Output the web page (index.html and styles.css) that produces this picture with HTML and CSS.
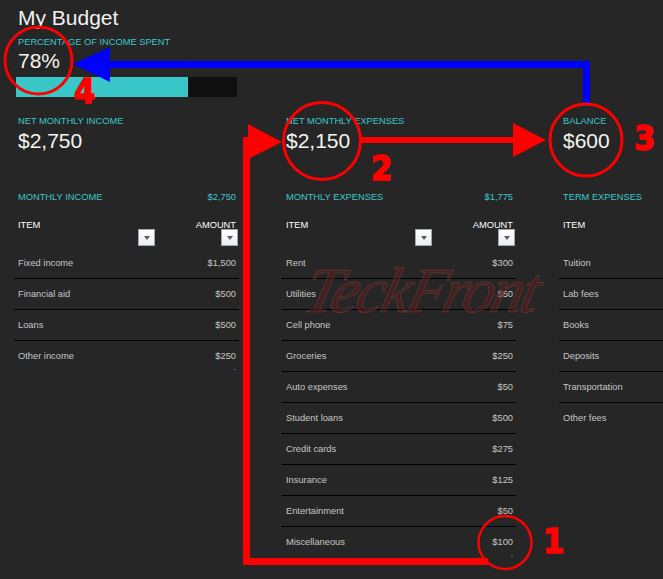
FILE: index.html
```html
<!DOCTYPE html>
<html lang="en">
<head>
<meta charset="utf-8">
<title>My Budget</title>
<link rel="stylesheet" href="styles.css">
</head>
<body>
<div class="page">
  <h1 class="title">My Budget</h1>
  <div class="grid">
    <div class="kpi spent">
      <div class="label">PERCENTAGE OF INCOME SPENT</div>
      <div class="value value-tight">78%</div>
      <div class="bar"><div class="bar-fill" style="width:78%"></div></div>
    </div>
    <div class="kpi kpi-row">
      <div class="label">NET MONTHLY INCOME</div>
      <div class="value">$2,750</div>
    </div>
    <div class="kpi kpi-row">
      <div class="label">NET MONTHLY EXPENSES</div>
      <div class="value">$2,150</div>
    </div>
    <div class="kpi kpi-row">
      <div class="label">BALANCE</div>
      <div class="value">$600</div>
    </div>

    <section class="block">
      <div class="block-head"><span>MONTHLY INCOME</span><span>$2,750</span></div>
      <div class="table t-income">
        <div class="thead">
          <div class="th th-item"><span class="th-text">ITEM</span><span class="dd"></span></div>
          <div class="th th-amt"><span class="th-text">AMOUNT</span><span class="dd"></span></div>
        </div>
        <div class="rows">
          <div class="row"><span>Fixed income</span><span>$1,500</span></div>
          <div class="row"><span>Financial aid</span><span>$500</span></div>
          <div class="row"><span>Loans</span><span>$500</span></div>
          <div class="row"><span>Other income</span><span>$250</span></div>
        </div>
      </div>
    </section>

    <section class="block">
      <div class="block-head"><span>MONTHLY EXPENSES</span><span>$1,775</span></div>
      <div class="table t-expenses">
        <div class="thead">
          <div class="th th-item"><span class="th-text">ITEM</span><span class="dd"></span></div>
          <div class="th th-amt"><span class="th-text">AMOUNT</span><span class="dd"></span></div>
        </div>
        <div class="rows">
          <div class="row"><span>Rent</span><span>$300</span></div>
          <div class="row"><span>Utilities</span><span>$50</span></div>
          <div class="row"><span>Cell phone</span><span>$75</span></div>
          <div class="row"><span>Groceries</span><span>$250</span></div>
          <div class="row"><span>Auto expenses</span><span>$50</span></div>
          <div class="row"><span>Student loans</span><span>$500</span></div>
          <div class="row"><span>Credit cards</span><span>$275</span></div>
          <div class="row"><span>Insurance</span><span>$125</span></div>
          <div class="row"><span>Entertainment</span><span>$50</span></div>
          <div class="row"><span>Miscellaneous</span><span>$100</span></div>
        </div>
      </div>
    </section>

    <section class="block">
      <div class="block-head"><span>TERM EXPENSES</span></div>
      <div class="table t-term">
        <div class="thead">
          <div class="th th-item"><span class="th-text">ITEM</span></div>
        </div>
        <div class="rows">
          <div class="row"><span>Tuition</span></div>
          <div class="row"><span>Lab fees</span></div>
          <div class="row"><span>Books</span></div>
          <div class="row"><span>Deposits</span></div>
          <div class="row"><span>Transportation</span></div>
          <div class="row"><span>Other fees</span></div>
        </div>
      </div>
    </section>
  </div>
</div>

<div class="watermark">TeckFront</div>

<svg class="annot" width="663" height="579" viewBox="0 0 663 579" xmlns="http://www.w3.org/2000/svg">
  <path d="M106 64.5 H586.5 V104" fill="none" stroke="#0000ff" stroke-width="7" stroke-linejoin="miter"/>
  <polygon points="73,64 110,47 110,82" fill="#0000ff"/>
  <path d="M360 140 H516" fill="none" stroke="#ff0000" stroke-width="6"/>
  <polygon points="546,140 513,123 513,157" fill="#ff0000"/>
  <path d="M246.5 137 V561.5 H488" fill="none" stroke="#ff0000" stroke-width="7" stroke-linejoin="miter"/>
  <polygon points="282,142 248,124 248,159" fill="#ff0000"/>
  <circle cx="38.5" cy="60.5" r="33.5" fill="none" stroke="#ff0000" stroke-width="3"/>
  <circle cx="322" cy="141" r="38.5" fill="none" stroke="#ff0000" stroke-width="3"/>
  <circle cx="586" cy="140" r="36" fill="none" stroke="#ff0000" stroke-width="3"/>
  <circle cx="505" cy="542.5" r="26.5" fill="none" stroke="#ff0000" stroke-width="2.5"/>
  <text class="num" x="74" y="103">4</text>
  <text class="num" x="371" y="180">2</text>
  <text class="num" x="634" y="150">3</text>
  <text class="num" x="543" y="553">1</text>
</svg>
</body>
</html>
```

FILE: styles.css
```css
html, body {
  margin: 0;
  padding: 0;
}

body {
  width: 663px;
  height: 579px;
  overflow: hidden;
  background: #262626;
  font-family: "Liberation Sans", Arial, sans-serif;
  position: relative;
}

.page {
  padding-left: 14px;
}

.title {
  margin: 6px 0 0 4px;
  font-size: 21px;
  line-height: 24px;
  font-weight: normal;
  color: #f2f2f2;
}

.grid {
  display: grid;
  grid-template-columns: 225px 234px 104px;
  column-gap: 43px;
  align-items: start;
}

.kpi {
  padding-left: 4px;
}

.spent {
  grid-column: 1 / -1;
  margin-top: 6px;
}

.kpi-row {
  margin-top: 18px;
}

.label {
  font-size: 9.3px;
  line-height: 12px;
  color: #3cc8cc;
  white-space: nowrap;
}

.value {
  margin-top: 2px;
  font-size: 21px;
  line-height: 24px;
  color: #f4f4f0;
}

.value-tight {
  margin-top: 1px;
}

.bar {
  margin: 4px 0 0 -2px;
  width: 221px;
  height: 20px;
  background: #0f0f0f;
}

.bar-fill {
  height: 100%;
  background: #38c6c9;
}

.block {
  margin-top: 38px;
}

.block-head {
  display: flex;
  justify-content: space-between;
  padding: 0 3px 0 4px;
  font-size: 9.3px;
  line-height: 12px;
  color: #3cc8cc;
  white-space: nowrap;
}

.table {
  position: relative;
  --item-w: 141px;
}

.t-expenses {
  --item-w: 150px;
}

.t-term {
  --item-w: 100%;
}

.table::after {
  content: "";
  position: absolute;
  right: 3px;
  bottom: 1px;
  width: 2px;
  height: 1px;
  background: #4a55d0;
}

.t-term::after {
  display: none;
}

.thead {
  display: flex;
  height: 27px;
  margin-top: 16px;
  margin-bottom: 2px;
}

.th {
  display: flex;
  flex-direction: column;
  align-items: flex-end;
  font-size: 9.3px;
  line-height: 12px;
  color: #ffffff;
}

.th-item {
  width: var(--item-w);
}

.th-item .th-text {
  align-self: flex-start;
  padding-left: 4px;
}

.th-amt {
  flex: 1;
  padding-right: 1px;
}

.th-amt .th-text {
  padding-right: 2px;
}

.dd {
  box-sizing: border-box;
  width: 17px;
  height: 17px;
  margin-top: -2px;
  border: 1px solid #a2a6ac;
  background: linear-gradient(#ffffff, #e9ecf1);
  display: flex;
  align-items: center;
  justify-content: center;
}

.dd::before {
  content: "";
  width: 0;
  height: 0;
  border-left: 3.5px solid transparent;
  border-right: 3.5px solid transparent;
  border-top: 4px solid #5a5a5a;
  margin-top: 1px;
}

.row {
  display: flex;
  justify-content: space-between;
  height: 30px;
  line-height: 30px;
  padding: 0 3px 0 4px;
  font-size: 9.3px;
  color: #c6c6c6;
  white-space: nowrap;
}

.row:not(:last-child) {
  border-bottom: 1px solid #000000;
}

.watermark {
  position: absolute;
  left: 306px;
  top: 259px;
  font-family: "Liberation Serif", "DejaVu Serif", serif;
  font-style: italic;
  font-size: 64px;
  line-height: 64px;
  color: rgba(95, 28, 28, 0.55);
  -webkit-text-stroke: 0.7px rgba(150, 85, 85, 0.45);
  transform: skewX(-14deg);
  letter-spacing: -3px;
  pointer-events: none;
  white-space: nowrap;
}

.annot {
  position: absolute;
  left: 0;
  top: 0;
  pointer-events: none;
}

.num {
  font-family: "Liberation Sans Narrow", "DejaVu Sans Condensed", sans-serif;
  font-weight: bold;
  font-size: 34px;
  fill: #ff0000;
  stroke: #ff0000;
  stroke-width: 1.5px;
}
```
